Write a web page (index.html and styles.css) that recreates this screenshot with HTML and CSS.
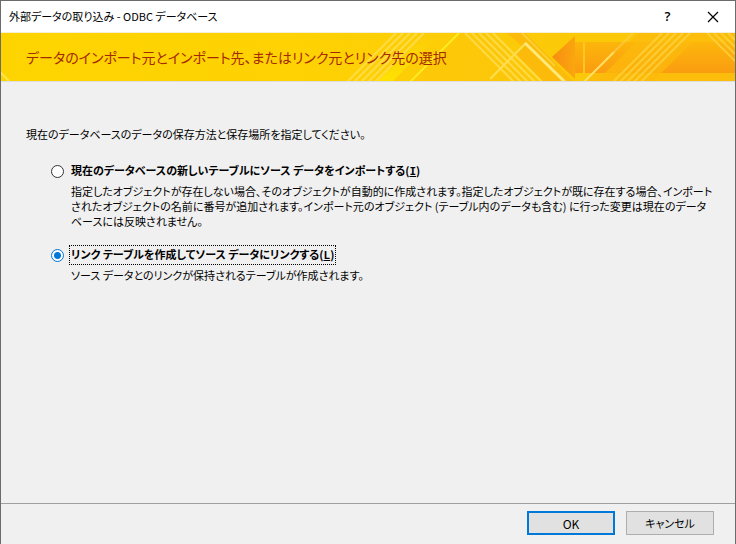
FILE: index.html
```html
<!DOCTYPE html>
<html lang="ja">
<head>
<meta charset="utf-8">
<title>外部データの取り込み - ODBC データベース</title>
<link rel="stylesheet" href="styles.css">
</head>
<body>
<main class="dialog">
  <header class="titlebar">
    <h1 class="title">外部データの取り込み - ODBC データベース</h1>
    <button class="caption-button" type="button" aria-label="ヘルプ">?</button>
    <button class="caption-button" type="button" aria-label="閉じる">
      <svg width="12" height="12" viewBox="0 0 12 12"><path d="M1 1L11 11M11 1L1 11" stroke="#000" stroke-width="1.2" fill="none"/></svg>
    </button>
  </header>
  <section class="banner">
    <svg class="banner-art" viewBox="0 0 736 48" width="736" height="48" aria-hidden="true">
      <defs>
        <linearGradient id="base" x1="0" x2="1" y1="0" y2="0">
          <stop offset="0" stop-color="#fed400"/><stop offset=".4" stop-color="#fed203"/><stop offset=".68" stop-color="#fccb08"/><stop offset="1" stop-color="#fbc40a"/>
        </linearGradient>
        <linearGradient id="head" x1="0" x2="1" y1="0" y2="0">
          <stop offset="0" stop-color="#f88d12"/><stop offset="1" stop-color="#fba60e"/>
        </linearGradient>
        <linearGradient id="shaft" x1="0" x2="0" y1="0" y2="1">
          <stop offset="0" stop-color="#fcb60b"/><stop offset="1" stop-color="#fa9c10"/>
        </linearGradient>
        <linearGradient id="glow" x1="0" x2="0" y1="0" y2="1">
          <stop offset="0" stop-color="#fccb08"/><stop offset="1" stop-color="#ffe600"/>
        </linearGradient>
      </defs>
      <rect width="736" height="48" fill="url(#base)"/>
      <path d="M0 38L10 48" stroke="#ffe34a" stroke-width="2"/>
      <path d="M379 48L427 0H442L394 48Z" fill="url(#glow)" opacity=".8"/>
      <path d="M412 48L460 0H490L538 48Z" fill="#fcc40b" opacity=".45"/>
      <path d="M508 0H526L574 48H544L517 21L524 14Z" fill="#fcb60c" opacity=".75"/>
      <path d="M586 48L640 0H736V48Z" fill="#fcb90c" opacity=".75"/>
      <path d="M575 9H736V40H575Z" fill="url(#shaft)"/>
      <path d="M553 24L576 3V46Z" fill="url(#head)"/>
      <path d="M585 9V40" stroke="#fdc620" stroke-width="2"/>
      <path d="M606 40L637 9H694L654 48H598Z" fill="#fcb90c" opacity=".75"/>
      <g stroke="#ffdf55" stroke-width="2" fill="none">
        <path d="M348 49L397 0M355 49L404 0M362 49L411 0M369 49L418 0M376 49L425 0" opacity=".8"/>
        <path d="M466 0L515 49M473 0L522 49M480 0L529 49M487 0L536 49M494 0L543 49" opacity=".8"/>
        <path d="M614 49L663 0M621 49L670 0M628 49L677 0M635 49L684 0M642 49L691 0" opacity=".55"/>
        <path d="M708 0L736 28M715 0L736 21M722 0L736 14M729 0L736 7" opacity=".55"/>
      </g>
      <path d="M411 49L460 0" stroke="#ffec20" stroke-width="2"/>
      <path d="M491 46L527 10" stroke="#ffde50" stroke-width="2"/>
      <path d="M526 10L566 49" stroke="#ffe978" stroke-width="3"/>
      <path d="M585 49L615 19" stroke="#ffe065" stroke-width="2"/>
      <path d="M615 19L634 0" stroke="#ffd050" stroke-width="2" opacity=".6"/>
      <path d="M523 0L556 33" stroke="#fdd943" stroke-width="2" opacity=".7"/>
    </svg>
    <h2 class="heading">データのインポート元とインポート先、またはリンク元とリンク先の選択</h2>
  </section>
  <form class="content" id="options">
    <p class="intro">現在のデータベースのデータの保存方法と保存場所を指定してください。</p>
    <div class="option">
      <input class="radio" type="radio" name="mode" id="import">
      <label class="option-label" for="import">現在のデータベースの新しいテーブルにソース データをインポートする(<u class="key">I</u>)</label>
      <p class="description">指定したオブジェクトが存在しない場合、そのオブジェクトが自動的に作成されます。指定したオブジェクトが既に存在する場合、インポート<br>されたオブジェクトの名前に番号が追加されます。インポート元のオブジェクト (テーブル内のデータも含む) に行った変更は現在のデータ<br>ベースには反映されません。</p>
    </div>
    <div class="option">
      <input class="radio" type="radio" name="mode" id="link" checked>
      <label class="option-label selected" for="link">リンク テーブルを作成してソース データにリンクする(<u class="key">L</u>)</label>
      <p class="description">ソース データとのリンクが保持されるテーブルが作成されます。</p>
    </div>
  </form>
  <footer class="footer">
    <button class="button primary" type="submit" form="options">OK</button>
    <button class="button" type="button">キャンセル</button>
  </footer>
</main>
</body>
</html>
```
FILE: styles.css
```css
* { box-sizing: border-box; }
body {
  margin: 0;
  font-family: "Noto Sans CJK JP", sans-serif;
  font-feature-settings: "palt";
  font-size: 11px;
  line-height: 15px;
  color: #000;
}
h1, h2, p { margin: 0; font-weight: 400; }
button { font: inherit; font-feature-settings: inherit; color: inherit; padding: 0; }
.dialog {
  min-height: 100vh;
  display: flex;
  flex-direction: column;
  background: #f0f0f0;
  border: 1px solid #6b6b6b;
  border-bottom: 0;
}
.titlebar {
  display: flex;
  align-items: center;
  height: 31px;
  padding-left: 8px;
  background: #fff;
}
.title { flex: 1; font-size: 11px; }
.caption-button {
  width: 45px;
  height: 30px;
  display: grid;
  place-items: center;
  border: 0;
  background: none;
  font-family: "Open Sans", sans-serif;
  font-size: 13px;
  font-weight: 600;
}
.banner {
  position: relative;
  display: flex;
  align-items: center;
  height: 50px;
  padding-left: 25px;
  background: #fed400;
  border-top: 1px solid #f5efda;
  border-bottom: 1px solid #dedede;
  overflow: hidden;
}
.banner-art { position: absolute; right: 0; top: 0; }
.heading { position: relative; font-size: 14px; line-height: 24px; color: #a52a00; }
.content { flex: 1; padding: 45px 24px 0 25px; }
.intro { margin-bottom: 19px; }
.option {
  display: grid;
  grid-template-columns: 18px 1fr;
  align-items: center;
  margin: 0 0 16px 25px;
  row-gap: 3px;
}
.radio {
  appearance: none;
  width: 13px;
  height: 13px;
  margin: 0;
  border: 1px solid #333;
  border-radius: 50%;
  background: #fff;
}
.radio:checked {
  border-color: #0078d7;
  background: radial-gradient(circle, #0078d7 0 3px, #fff 4px);
}
.option-label {
  justify-self: start;
  font-weight: 700;
  padding: 1px;
  border: 1px solid transparent;
}
.selected { border: 1px dotted #000; }
.key { font-family: "DejaVu Sans Mono", monospace; }
.description { grid-column: 2; padding-left: 2px; white-space: nowrap; }
.footer {
  display: flex;
  justify-content: flex-end;
  gap: 11px;
  height: 41px;
  padding: 7px 21px 0 0;
  border-top: 1px solid #a0a0a0;
}
.button { width: 88px; height: 24px; background: #e1e1e1; border: 1px solid #adadad; }
.primary { border: 2px solid #0078d7; font-size: 12px; }
```
